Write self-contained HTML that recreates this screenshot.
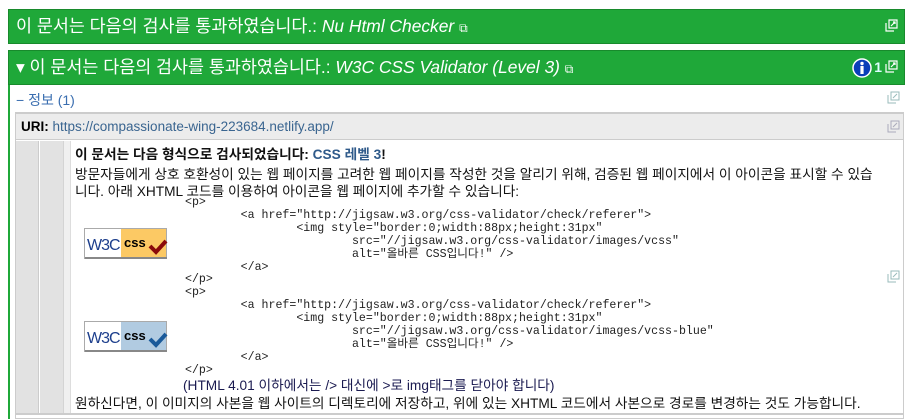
<!DOCTYPE html>
<html><head><meta charset="utf-8"><style>
*{margin:0;padding:0;box-sizing:border-box}
body{width:911px;height:419px;overflow:hidden;background:#fff;font-family:"Liberation Sans","Noto Sans CJK KR",sans-serif;position:relative}
.a{position:absolute;white-space:nowrap}
.bar{position:absolute;left:8px;width:897px;height:35px;background:#1fa839;border:1px solid #188a2c;color:#fff;font-size:17.4px;line-height:33px;padding-left:7px}
.bar i{font-style:italic}
.code{font-family:"Liberation Mono","Noto Sans CJK KR",monospace;font-size:11.6px;color:#222;line-height:12.9px;white-space:pre}
.t{font-size:13.7px;color:#111}
</style></head><body>
<div class="bar" style="top:9px">이 문서는 다음의 검사를 통과하였습니다.: <i>Nu Html Checker</i> <span style="font-size:12px">⧉</span>
<svg class="a" style="right:6px;top:9px" width="13" height="13" viewBox="0 0 13 13" fill="none" stroke="#fff" stroke-width="1.2"><path d="M1 4v8h8M4 1h8v8H4z"/><path d="M6 7l4-4M8 3h2v2"/></svg></div>
<div class="bar" style="top:50px">▾ 이 문서는 다음의 검사를 통과하였습니다.: <i>W3C CSS Validator (Level 3)</i> <span style="font-size:12px">⧉</span>
<svg class="a" style="right:32px;top:7px" width="20" height="20"><circle cx="10" cy="10" r="9" fill="#0a3fb8" stroke="#fff" stroke-width="1.5"/><circle cx="10" cy="5.5" r="1.7" fill="#fff"/><rect x="8.4" y="8" width="3.2" height="8" fill="#fff"/></svg>
<span class="a" style="right:22px;top:0;font-size:14px;font-weight:bold;color:#dff">1</span>
<svg class="a" style="right:6px;top:9px" width="13" height="13" viewBox="0 0 13 13" fill="none" stroke="#fff" stroke-width="1.2"><path d="M1 4v8h8M4 1h8v8H4z"/><path d="M6 7l4-4M8 3h2v2"/></svg></div>
<div class="a" style="left:8px;top:85px;width:2px;height:334px;background:#1fa839"></div>
<div class="a" style="left:16px;top:90px;font-size:14px;color:#3a6eb0">− 정보 (1)</div>
<svg class="a" style="left:887px;top:91px" width="13" height="13" viewBox="0 0 13 13" fill="none" stroke="#9bb" stroke-width="1"><path d="M1 4v8h8M4 1h8v8H4z"/><path d="M6 7l4-4"/></svg>
<div class="a" style="left:15px;top:112px;width:889px;height:307px;border:1px solid #ccc;border-top-width:2px;background:#fff"></div>
<div class="a" style="left:16px;top:114px;width:887px;height:26px;background:#ececec;border-bottom:1px solid #ccc;font-size:13.5px;line-height:25px;padding-left:5px"><b>URI:</b> <span style="color:#3a6590">https://compassionate-wing-223684.netlify.app/</span></div>
<svg class="a" style="left:887px;top:120px" width="13" height="13" viewBox="0 0 13 13" fill="none" stroke="#aab" stroke-width="1"><path d="M1 4v8h8M4 1h8v8H4z"/><path d="M6 7l4-4"/></svg>
<div class="a" style="left:16px;top:141px;width:23px;height:273px;background:#e2e2e2;border-right:1px solid #ccc"></div>
<div class="a" style="left:40px;top:141px;width:24px;height:273px;background:#e2e2e2;border-right:1px solid #d4d4d4"></div>
<div class="a" style="left:64px;top:141px;width:7px;height:273px;background:#f0f0f0;border-right:1px solid #ddd"></div>
<div class="a" style="left:16px;top:413px;width:887px;height:2px;background:#ccc"></div>
<div class="a t" style="left:75px;top:143px;font-weight:bold">이 문서는 다음 형식으로 검사되었습니다: <span style="color:#2f5a8a">CSS 레벨 3</span>!</div>
<div class="a t" style="left:75px;top:163px">방문자들에게 상호 호환성이 있는 웹 페이지를 고려한 웹 페이지를 작성한 것을 알리기 위해, 검증된 웹 페이지에서 이 아이콘을 표시할 수 있습</div>
<div class="a t" style="left:75px;top:180px">니다. 아래 XHTML 코드를 이용하여 아이콘을 웹 페이지에 추가할 수 있습니다:</div>
<div class="a code" style="left:185px;top:197px">&lt;p&gt;
        &lt;a href="http://jigsaw.w3.org/css-validator/check/referer"&gt;
                &lt;img style="border:0;width:88px;height:31px"
                        src="//jigsaw.w3.org/css-validator/images/vcss"
                        alt="올바른 CSS입니다!" /&gt;
        &lt;/a&gt;
&lt;/p&gt;
&lt;p&gt;
        &lt;a href="http://jigsaw.w3.org/css-validator/check/referer"&gt;
                &lt;img style="border:0;width:88px;height:31px"
                        src="//jigsaw.w3.org/css-validator/images/vcss-blue"
                        alt="올바른 CSS입니다!" /&gt;
        &lt;/a&gt;
&lt;/p&gt;</div>
<svg class="a" style="left:887px;top:270px" width="13" height="13" viewBox="0 0 13 13" fill="none" stroke="#9bb" stroke-width="1"><path d="M1 4v8h8M4 1h8v8H4z"/><path d="M6 7l4-4"/></svg>
<svg class="a" style="left:84px;top:228px" width="84" height="32">
<rect x="0.5" y="0.5" width="82" height="30" fill="#fff" stroke="#aaa"/><rect x="37" y="1" width="45" height="29" fill="#fcc964"/><rect x="1" y="29" width="82" height="2" fill="#888"/>
<text x="3" y="22" font-family="Liberation Sans Narrow, Liberation Sans" font-size="16" fill="#1c3e8c" letter-spacing="-1">W3C</text>
<text x="40" y="19" font-family="Liberation Sans" font-weight="bold" font-size="13" fill="#000">css</text>
<path d="M66 18l6 6 10-11" stroke="#8b0a0a" stroke-width="4" fill="none"/></svg>
<svg class="a" style="left:84px;top:321px" width="84" height="32">
<rect x="0.5" y="0.5" width="82" height="30" fill="#fff" stroke="#aaa"/><rect x="37" y="1" width="45" height="29" fill="#b1cbe1"/><rect x="1" y="29" width="82" height="2" fill="#888"/>
<text x="3" y="22" font-family="Liberation Sans Narrow, Liberation Sans" font-size="16" fill="#1c3e8c" letter-spacing="-1">W3C</text>
<text x="40" y="19" font-family="Liberation Sans" font-weight="bold" font-size="13" fill="#000">css</text>
<path d="M66 18l6 6 10-11" stroke="#1a5a9a" stroke-width="4" fill="none"/></svg>
<div class="a t" style="left:183px;top:374px;color:#1a1a50">(HTML 4.01 이하에서는 /&gt; 대신에 &gt;로 img태그를 닫아야 합니다)</div>
<div class="a t" style="left:75px;top:392px">원하신다면, 이 이미지의 사본을 웹 사이트의 디렉토리에 저장하고, 위에 있는 XHTML 코드에서 사본으로 경로를 변경하는 것도 가능합니다.</div>
</body></html>
